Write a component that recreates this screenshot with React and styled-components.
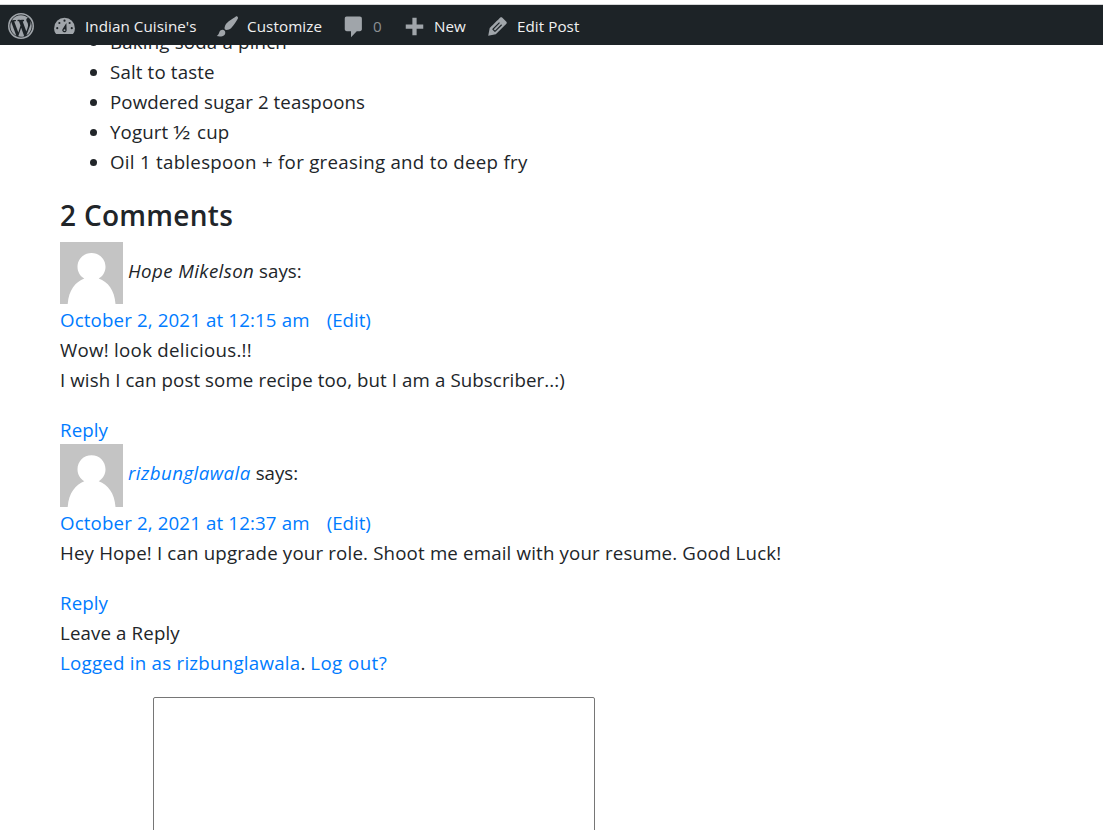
import React from "react";
import styled, { createGlobalStyle } from "styled-components";

const GlobalStyle = createGlobalStyle`
  * { box-sizing: border-box; }
  html, body { margin: 0; height: 830px; overflow: hidden; background: #fff; }
  body {
    font-family: "Open Sans", "Noto Sans", sans-serif;
    font-size: 18.7px;
    font-weight: 370;
    line-height: 30px;
    color: #212529;
  }
`;

const Page = styled.div`
  width: 1103px;
  height: 830px;
  overflow: hidden;
  display: flex;
  flex-direction: column;
`;

const AdminBar = styled.header`
  flex: none;
  position: relative;
  z-index: 1;
  height: 41px;
  margin-top: 4px;
  border-top: 1px solid #d5d6d7;
  background: #1d2327;
  display: flex;
  align-items: center;
  padding: 2px 0 0 8px;
`;

const BarItem = styled.a`
  display: flex;
  align-items: center;
  width: ${(p) => p.$width}px;
  color: ${(p) => (p.$muted ? "#8b8f93" : "#f0f0f1")};
  font-size: 15.2px;
  font-weight: 400;
  letter-spacing: ${(p) => p.$track || 0}px;
  white-space: nowrap;
`;

const BarIcon = styled.svg`
  flex: none;
  width: ${(p) => p.$size || 25}px;
  height: ${(p) => p.$size || 25}px;
  margin-right: ${(p) => p.$gap || 0}px;
  fill: #a0a5aa;
`;

const Content = styled.main`
  padding-left: 60px;
  margin-top: -18px;
`;

const Ingredients = styled.ul`
  margin: 0 0 20px;
  padding-left: 50px;
`;

const Ingredient = styled.li`
  height: 30px;
  letter-spacing: ${(p) => p.$track || 0}px;
`;

const Fraction = styled.span`
  display: inline-block;
  width: 19px;
  transform: scaleX(1.2);
  transform-origin: left;
`;

const Heading = styled.h2`
  margin: 0 0 9px;
  font-size: 28px;
  font-weight: 560;
  line-height: 36px;
  letter-spacing: ${(p) => p.$track || 0}px;
`;

const Comment = styled.article`
  margin-bottom: ${(p) => p.$after || 0}px;
`;

const Author = styled.div`
  display: flex;
  height: ${(p) => p.$height}px;
  line-height: 58px;
  white-space: pre;
`;

const Avatar = styled.svg`
  flex: none;
  width: 63px;
  height: ${(p) => p.$height}px;
  margin-right: 5px;
`;

const Line = styled.div`
  height: 30px;
  white-space: pre;
  letter-spacing: ${(p) => p.$track || 0}px;
`;

const Name = styled.cite`
  color: ${(p) => (p.$link ? "#007bff" : "inherit")};
  letter-spacing: ${(p) => p.$track || 0}px;
`;

const Link = styled.a`
  color: #007bff;
  letter-spacing: ${(p) => p.$track || 0}px;
  margin-right: ${(p) => p.$gap || 0}px;
`;

const Body = styled.div`
  margin-bottom: 20px;
`;

const ReplyBox = styled.textarea`
  display: block;
  width: 442px;
  height: 250px;
  margin: 19px 0 0 93px;
  border: 1px solid #767676;
  border-radius: 2px;
  resize: none;
  background: #fff;
`;

const cutout = "#1d2327";

const icons = {
  wordpress: (
    <>
      <circle cx="10" cy="10" r="9.4" fill="none" stroke="#a0a5aa" strokeWidth="1.2" />
      <path
        transform="translate(.75 .75) scale(.925)"
        d="M7.780 15.370L4.370 6.220c.55-.02 1.170-.08 1.170-.08.5-.06.44-1.130-.06-1.110 0 0-1.450.11-2.370.11-.18 0-.37 0-.58-.01C4.120 2.690 6.870 1.110 10 1.110c2.330 0 4.450.87 6.050 2.340-.68-.11-1.650.39-1.650 1.580 0 .74.45 1.360.9 2.100.35.61.55 1.360.55 2.460 0 1.490-1.400 5-1.400 5l-3.030-8.370c.54-.02.82-.17.82-.17.5-.05.44-1.250-.06-1.220 0 0-1.440.12-2.380.12-.87 0-2.330-.12-2.330-.12-.5-.03-.56 1.200-.06 1.220l.92.08 1.260 3.410zM17.410 10c.24-.64.74-1.870.43-4.250.7 1.290 1.050 2.710 1.050 4.250 0 3.290-1.730 6.240-4.400 7.780.97-2.590 1.940-5.200 2.920-7.780zM6.100 18.090C3.120 16.650 1.110 13.530 1.110 10c0-1.300.23-2.480.72-3.590C3.250 10.300 4.670 14.200 6.100 18.090zm4.030-6.630l2.580 6.980c-.86.29-1.760.45-2.710.45-.79 0-1.570-.11-2.290-.33.81-2.380 1.620-4.740 2.420-7.100z"
      />
    </>
  ),
  dashboard: (
    <>
      <path d="M3.300 16C2.100 14.700 1.700 13 1.700 11.300a8.300 8.300 0 0 1 16.600 0c0 1.700-.4 3.400-1.600 4.700z" />
      <g fill={cutout}>
        <circle cx="4.200" cy="11.300" r=".85" />
        <circle cx="5.900" cy="7.200" r=".85" />
        <circle cx="10" cy="5.300" r=".85" />
        <circle cx="14.100" cy="7.200" r=".85" />
        <circle cx="15.800" cy="11.300" r=".85" />
        <path d="M11.500 7.200l.2 5.600a1.750 1.750 0 1 1-3.300-.7z" />
      </g>
      <circle cx="10" cy="12.900" r=".75" />
    </>
  ),
  brush: (
    <path d="M18.330 3.570s.27-.8-.31-1.360c-.53-.52-1.220-.24-1.220-.24-.61.3-5.760 3.470-7.670 5.570-.86.96-2.060 3.790-1.090 4.820.92.98 3.960-.17 4.790-1 2.060-2.060 5.210-7.170 5.500-7.790zM1.400 17.650c2.370-1.560 1.460-3.410 3.230-4.640.93-.65 2.220-.62 3.080.29.63.67.8 2.570-.16 3.460-1.570 1.450-4 1.550-6.150.89z" />
  ),
  comment: (
    <path d="M4.500 2h10.500c1.100 0 1.700.7 1.700 1.800v8.200c0 1.100-.6 1.700-1.700 1.700h-2.400l-4.600 4.800v-4.800H4.700c-1.100 0-1.700-.6-1.700-1.700V3.800C3 2.700 3.500 2 4.500 2z" />
  ),
  plus: <path d="M17 8.300v3.400h-5.300v5.300H8.300v-5.300H3V8.300h5.300V3h3.400v5.300H17z" />,
  edit: (
    <>
      <path d="M13.890 2.900l3.200 3.200c.46.46.42 1.240.03 1.640l-8.500 8.520-6.050 1.160 1.160-6.050s8.090-8.130 8.480-8.530c.39-.39 1.220-.39 1.680.06z" />
      <path
        d="M6.300 12.200l5.300-5.300M8 13.900l5.300-5.300M6.100 12l2.100 2.100"
        fill="none"
        stroke={cutout}
        strokeWidth=".9"
      />
    </>
  ),
};

const Icon = ({ name, size, gap }) => (
  <BarIcon viewBox="0 0 20 20" $size={size} $gap={gap} aria-hidden="true">
    {icons[name]}
  </BarIcon>
);

const Silhouette = ({ height }) => (
  <Avatar $height={height} viewBox="0 0 63 63" preserveAspectRatio="none" aria-hidden="true">
    <rect width="63" height="63" fill="#c4c4c4" />
    <path
      fill="#fff"
      d="M31.500 11.200c8 0 14 6.200 14 14 0 5.200-2.700 9.600-6.800 12C48 40.500 54.500 49 55.500 63H7.700C8.700 49 15.500 40.500 24.300 37.200c-4.100-2.400-6.800-6.800-6.800-12 0-7.800 6-14 14-14z"
    />
  </Avatar>
);

export default function App() {
  return (
    <Page>
      <GlobalStyle />
      <AdminBar>
        <BarItem $width={44}>
          <Icon name="wordpress" size={26} />
        </BarItem>
        <BarItem $width={163} $track={0.06}>
          <Icon name="dashboard" gap={8} />
          Indian Cuisine's
        </BarItem>
        <BarItem $width={126} $track={0.1}>
          <Icon name="brush" gap={7} />
          Customize
        </BarItem>
        <BarItem $width={61} $muted>
          <Icon name="comment" gap={7} />0
        </BarItem>
        <BarItem $width={83}>
          <Icon name="plus" gap={7} />
          New
        </BarItem>
        <BarItem $width={110} $track={0.06}>
          <Icon name="edit" gap={7} />
          Edit Post
        </BarItem>
      </AdminBar>
      <Content>
        <Ingredients>
          <Ingredient $track={0.18}>Baking soda a pinch</Ingredient>
          <Ingredient $track={0.15}>Salt to taste</Ingredient>
          <Ingredient $track={0.08}>Powdered sugar 2 teaspoons</Ingredient>
          <Ingredient $track={0.1}>
            Yogurt <Fraction>½</Fraction> cup
          </Ingredient>
          <Ingredient $track={0.28}>Oil 1 tablespoon + for greasing and to deep fry</Ingredient>
        </Ingredients>
        <Heading $track={0.3}>2 Comments</Heading>
        <Comment $after={-1}>
          <Author $height={63}>
            <Silhouette height={62} />
            <Name $track={0.4}>Hope Mikelson</Name>
            <span> says:</span>
          </Author>
          <Line>
            <Link $track={0.14} $gap={17}>October 2, 2021 at 12:15 am</Link>
            <Link>(Edit)</Link>
          </Line>
          <Body>
            <Line $track={0.27}>Wow! look delicious.!!</Line>
            <Line $track={0.1}>I wish I can post some recipe too, but I am a Subscriber..:)</Line>
          </Body>
          <Line>
            <Link $track={0.1}>Reply</Link>
          </Line>
        </Comment>
        <Comment>
          <Author $height={64}>
            <Silhouette height={63} />
            <Name $link $track={0.45}>rizbunglawala</Name>
            <span> says:</span>
          </Author>
          <Line>
            <Link $track={0.14} $gap={17}>October 2, 2021 at 12:37 am</Link>
            <Link>(Edit)</Link>
          </Line>
          <Body>
            <Line $track={0.17}>Hey Hope! I can upgrade your role. Shoot me email with your resume. Good Luck!</Line>
          </Body>
          <Line>
            <Link $track={0.1}>Reply</Link>
          </Line>
        </Comment>
        <Line $track={0.13}>Leave a Reply</Line>
        <Line>
          <Link $track={0.25}>Logged in as rizbunglawala</Link>. <Link $track={0.45}>Log out?</Link>
        </Line>
        <ReplyBox aria-label="Comment" />
      </Content>
    </Page>
  );
}
